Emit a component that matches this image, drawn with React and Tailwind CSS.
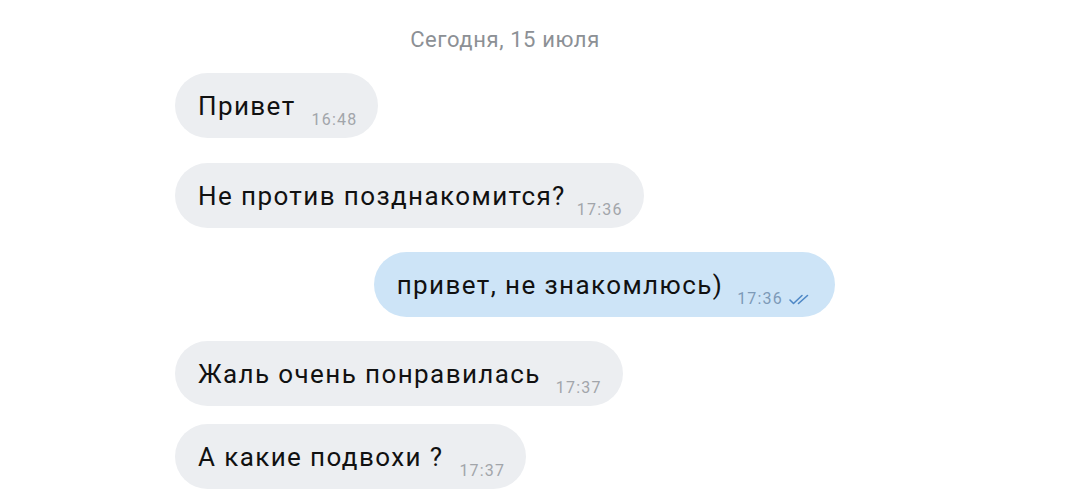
import React from "react";

function Ticks() {
  return (
    <svg width="26" height="11" viewBox="0 0 26 11" fill="none" className="ml-[5px]">
      <path d="M2 6 L5.5 9.5 L14 1.5" stroke="#4f88c6" strokeWidth="1.6" strokeLinecap="round" strokeLinejoin="round" />
      <path d="M10.5 9.5 L19.5 1.5" stroke="#4f88c6" strokeWidth="1.6" strokeLinecap="round" />
    </svg>
  );
}

function Bubble({ text, time, gap, mine, className }) {
  return (
    <div
      className={
        "flex h-[65px] items-center rounded-full pl-[23px] pr-[21px] " +
        (mine ? "self-end bg-[#cde4f7] " : "self-start bg-[#eceef1] ") +
        className
      }
    >
      <span className="text-[26px] leading-none tracking-[1.4px] text-[#111111]">{text}</span>
      <span
        className={
          "flex items-center self-end mb-[10px] text-[16px] leading-none tracking-[1.2px] " +
          (mine ? "text-[#7d9ab8]" : "text-[#a2a5aa]")
        }
        style={{ marginLeft: gap }}
      >
        {time}
        {mine && <Ticks />}
      </span>
    </div>
  );
}

export default function App() {
  return (
    <div className="h-[502px] w-full overflow-hidden bg-white" style={{ fontFamily: "Roboto, 'Noto Sans', sans-serif" }}>
      <div className="ml-[175px] flex w-[660px] flex-col">
        <div className="mt-[29px] self-center text-[22px] leading-none tracking-[0.6px] text-[#8c9095]">
          Сегодня, 15 июля
        </div>
        <Bubble className="mt-[22px]" text="Привет" time="16:48" gap={16} />
        <Bubble className="mt-[25px]" text="Не против позднакомится?" time="17:36" gap={11} />
        <Bubble className="mt-[24px]" text="привет, не знакомлюсь)" time="17:36" gap={14} mine />
        <Bubble className="mt-[24px]" text="Жаль очень понравилась" time="17:37" gap={15} />
        <Bubble className="mt-[18px]" text="А какие подвохи ?" time="17:37" gap={16} />
      </div>
    </div>
  );
}
